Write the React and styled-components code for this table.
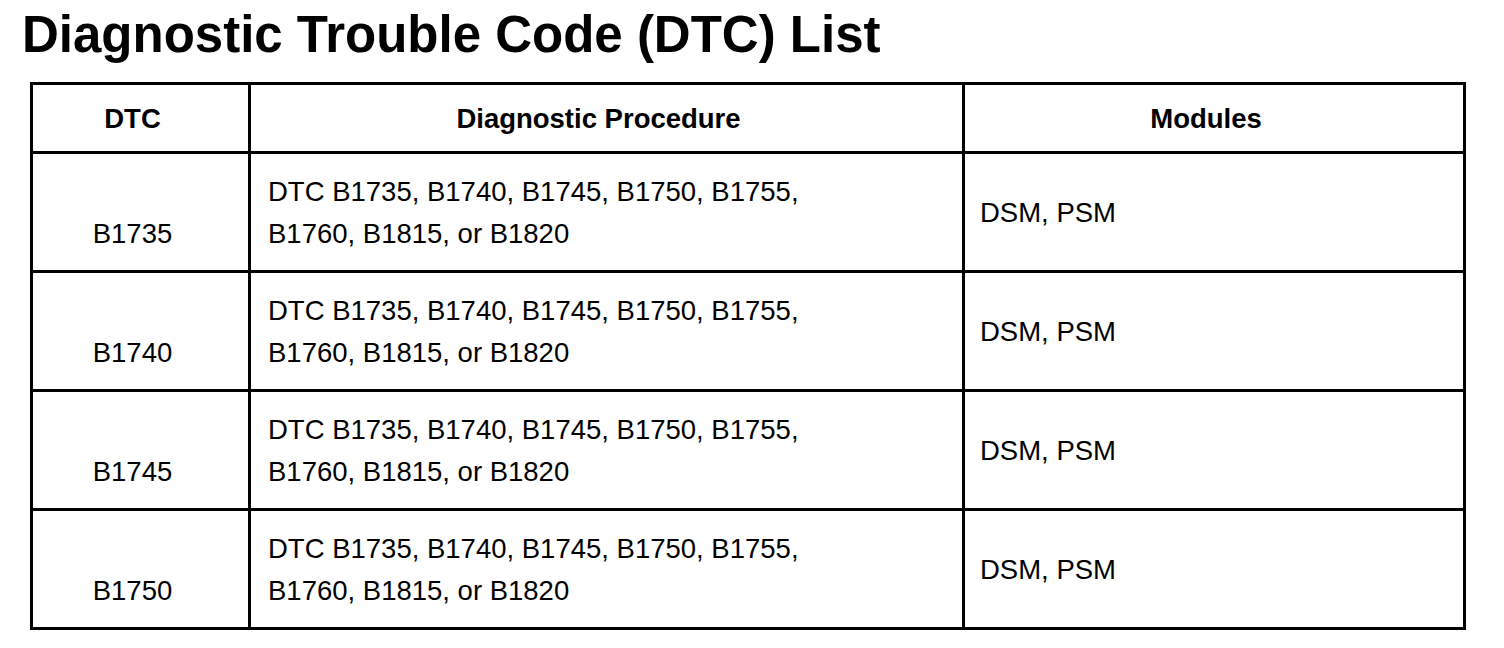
import React from "react";
import styled, { createGlobalStyle } from "styled-components";

const GlobalStyle = createGlobalStyle`
  html, body {
    margin: 0;
    padding: 0;
    background: #ffffff;
  }
  body {
    font-family: "Liberation Sans", Arial, sans-serif;
    color: #000000;
  }
`;

const Page = styled.div`
  width: 1504px;
  height: 648px;
  padding: 12px 0 0 30px;
  box-sizing: border-box;
`;

const Title = styled.h1`
  margin: 0 0 0 -8px;
  font-size: 51px;
  line-height: 46px;
  font-weight: bold;
  height: 70px;
`;

const Grid = styled.div`
  display: grid;
  grid-template-columns: 218px 714px 501px;
  grid-template-rows: 69px repeat(4, 119px);
  width: 1436px;
  border-left: 3px solid #000;
  border-top: 3px solid #000;
  box-sizing: border-box;
`;

const Cell = styled.div`
  display: flex;
  align-items: center;
  justify-content: ${p => (p.$center ? "center" : "flex-start")};
  padding: ${p => (p.$center ? "2px 16px 0 0" : `2px 0 0 ${p.$indent || 17}px`)};
  border-right: 3px solid #000;
  border-bottom: 3px solid #000;
  font-size: 27.5px;
  font-weight: ${p => (p.$head ? "bold" : "normal")};
  line-height: 42px;
`;

const Code = styled.span`
  padding-top: 42px;
`;

const rows = ["B1735", "B1740", "B1745", "B1750"];

export default function App() {
  return (
    <>
      <GlobalStyle />
      <Page>
        <Title>Diagnostic Trouble Code (DTC) List</Title>
        <Grid>
          <Cell $head $center>DTC</Cell>
          <Cell $head $center>Diagnostic Procedure</Cell>
          <Cell $head $center>Modules</Cell>
          {rows.map(code => (
            <React.Fragment key={code}>
              <Cell $center>
                <Code>{code}</Code>
              </Cell>
              <Cell>
                <div>
                  DTC B1735, B1740, B1745, B1750, B1755,
                  <br />
                  B1760, B1815, or B1820
                </div>
              </Cell>
              <Cell $indent={15}>DSM, PSM</Cell>
            </React.Fragment>
          ))}
        </Grid>
      </Page>
    </>
  );
}
